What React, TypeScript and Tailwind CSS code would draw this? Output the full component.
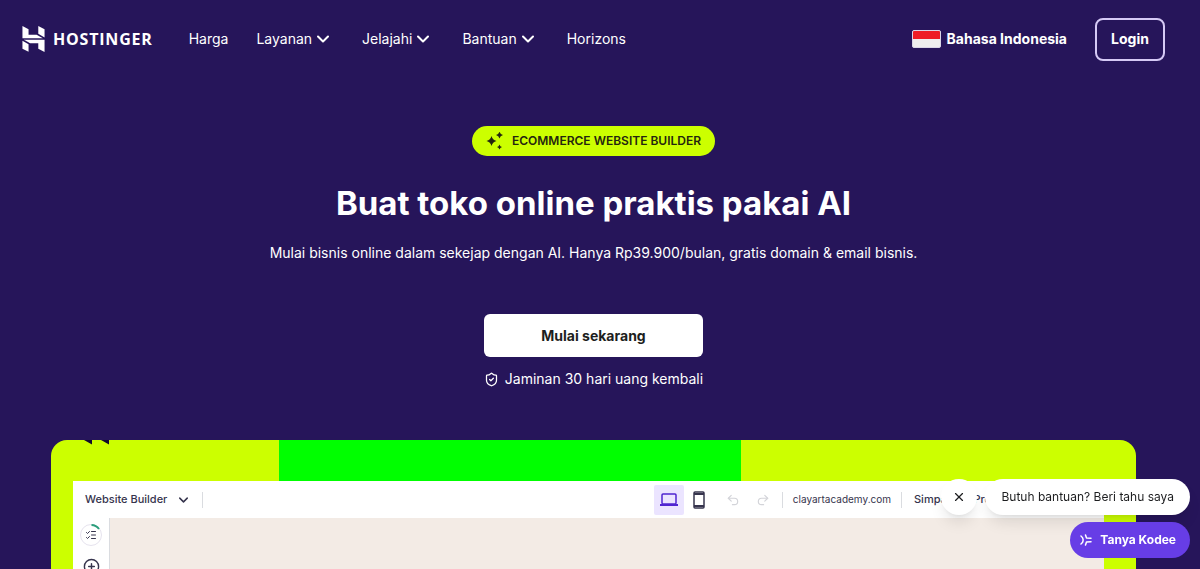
import React from 'react';
import { ListChecks, PlusCircle, Redo2, ShieldCheck, Undo2, X } from 'lucide-react';

const NAV_ITEMS = [
  { label: 'Harga', hasMenu: false },
  { label: 'Layanan', hasMenu: true },
  { label: 'Jelajahi', hasMenu: true },
  { label: 'Bantuan', hasMenu: true },
  { label: 'Horizons', hasMenu: false },
];

const Chevron: React.FC<{ className: string }> = ({ className }) => (
  <svg viewBox="0 0 12 8" className={className} fill="none" aria-hidden="true">
    <path d="M1 1.500l5 5 5-5" stroke="currentColor" strokeWidth="2" strokeLinecap="round" strokeLinejoin="round" />
  </svg>
);

const Logo: React.FC = () => (
  <a href="#" className="flex items-center gap-2 text-white">
    <svg viewBox="1.8 0 20.4 24" className="h-[26px] w-[23px]" fill="currentColor" aria-hidden="true">
      <path d="M16.415 0v7.16l5.785 3.384V2.949L16.415 0ZM1.8 0v11.237h18.815L14.89 8.09l-7.457-.003V3.024L1.8 0Zm14.615 20.894v-5.019l-7.514-.005c.007.033-5.82-3.197-5.82-3.197l19.119.091V24l-5.785-3.106ZM1.8 13.551v7.343l5.633 2.949v-6.988L1.8 13.551Z" />
    </svg>
    <span className="font-['Open_Sans',sans-serif] text-base font-bold tracking-wider">HOSTINGER</span>
  </a>
);

const Header: React.FC = () => (
  <header className="flex h-[78px] items-center justify-between px-[22px]">
    <div className="flex items-center gap-9">
      <Logo />
      <nav className="flex items-center gap-7 text-sm">
        {NAV_ITEMS.map(({ label, hasMenu }) =>
          hasMenu ? (
            <button key={label} type="button" className="flex items-center gap-[5px] pr-[5px]">
              {label}
              <Chevron className="h-2 w-3" />
            </button>
          ) : (
            <a key={label} href="#">
              {label}
            </a>
          )
        )}
      </nav>
    </div>
    <div className="flex items-center gap-7 text-sm font-bold">
      <button type="button" className="flex items-center gap-1.5">
        <span className="flex h-[18px] w-[29px] flex-col overflow-hidden rounded-xs border border-[#d9d6e6] bg-[#eeeeee]">
          <span className="h-2 bg-[#ee1c25]" />
        </span>
        Bahasa Indonesia
      </button>
      <a href="#" className="flex h-[43px] w-[70px] items-center justify-center rounded-lg border-2 border-[#d5c9f5]">
        Login
      </a>
    </div>
  </header>
);

const Hero: React.FC = () => (
  <section className="flex flex-col items-center pt-12 text-center">
    <div className="flex h-[30px] items-center gap-2 rounded-full bg-[#ccff00] px-3.5 text-xs font-semibold text-[#25260f]">
      <svg viewBox="0 0 18 18" className="size-[18px]" fill="currentColor" aria-hidden="true">
        <path d="M5.500 4 Q6.500 8 10.500 9 Q6.500 10 5.500 14 Q4.500 10 .5 9 Q4.500 8 5.500 4Z" />
        <path d="M13.500 -.5 Q14.200 2.300 17 3 Q14.200 3.700 13.500 6.500 Q12.800 3.700 10 3 Q12.800 2.300 13.500 -.5Z" />
        <path d="M13.500 12.500 Q14 14.500 16 15 Q14 15.500 13.500 17.500 Q13 15.500 11 15 Q13 14.500 13.500 12.500Z" />
      </svg>
      ECOMMERCE WEBSITE BUILDER
    </div>
    <h1 className="mt-6 text-[33px] leading-[46px] font-bold">Buat toko online praktis pakai AI</h1>
    <p className="mt-3.5 text-sm leading-[26px]">
      Mulai bisnis online dalam sekejap dengan AI. Hanya Rp39.900/bulan, gratis domain &amp; email bisnis.
    </p>
    <a
      href="#"
      className="mt-12 flex h-[43px] w-[219px] items-center justify-center rounded-md bg-white text-sm font-bold text-[#1d1e20]"
    >
      Mulai sekarang
    </a>
    <p className="mt-3 flex items-center gap-1.5 text-sm">
      <ShieldCheck size={15} />
      Jaminan 30 hari uang kembali
    </p>
  </section>
);

const Divider: React.FC = () => <span className="h-4 w-px bg-[#dadce0]" />;

const Toolbar: React.FC = () => (
  <div className="flex h-[37px] items-center bg-white text-[11px]">
    <button type="button" className="flex items-center gap-3 pl-3 font-medium">
      Website Builder
      <Chevron className="h-1.5 w-[9px]" />
    </button>
    <span className="ml-3.5 flex flex-1">
      <Divider />
    </span>
    <button
      type="button"
      aria-label="Desktop"
      className="flex size-[30px] items-center justify-center rounded-xs bg-[#ebe4ff] text-[#5025d1]"
    >
      <svg viewBox="0 0 18 14" className="h-[14px] w-[18px]" fill="none" aria-hidden="true">
        <rect x="2" y="1" width="14" height="10" rx="1" stroke="currentColor" strokeWidth="1.500" />
        <path d="M0 11h18v1.500q0 .5-.5.5h-17q-.5 0-.5-.5z" fill="currentColor" />
      </svg>
    </button>
    <button type="button" aria-label="Mobile" className="flex w-[30px] items-center justify-center">
      <svg viewBox="0 0 12 18" className="h-[18px] w-3" fill="none" aria-hidden="true">
        <rect x="1" y="1" width="10" height="16" rx="1" stroke="currentColor" strokeWidth="1.500" />
        <path d="M1 3h10M1 15h10" stroke="currentColor" strokeWidth="2" />
      </svg>
    </button>
    <div className="flex items-center gap-4 px-3 text-[#d3d4d9]">
      <button type="button" aria-label="Undo">
        <Undo2 size={14} />
      </button>
      <button type="button" aria-label="Redo">
        <Redo2 size={14} />
      </button>
    </div>
    <Divider />
    <span className="px-2.5 text-[10px]">clayartacademy.com</span>
    <Divider />
    <div className="flex w-[202px] gap-5 pl-3 font-medium">
      <button type="button">Simpan</button>
      <button type="button">Preview</button>
    </div>
  </div>
);

const BuilderPreview: React.FC = () => (
  <section className="relative mx-[51px] mt-[51px] flex flex-1 flex-col overflow-hidden rounded-t-2xl bg-[#ccff00] text-[#36344d]">
    <svg viewBox="0 0 26 5" className="absolute top-0 left-[33px] h-[5px] w-[26px]" fill="#120a2e" aria-hidden="true">
      <path d="M0 0h8v4.500zM17 0h8v4.500z" />
    </svg>
    <div className="mr-[395px] ml-[228px] h-[41px] shrink-0 bg-[#00ff00]" />
    <div className="mr-8 ml-[22px] flex flex-1 flex-col">
      <Toolbar />
      <div className="flex flex-1">
        <aside className="flex w-[37px] flex-col items-center gap-3 border-r border-[#dadce0] bg-white pt-1.5">
          <button
            type="button"
            aria-label="Checklist"
            className="relative flex size-[22px] items-center justify-center rounded-full border border-[#e6e3ee]"
          >
            <ListChecks size={12} />
            <svg viewBox="0 0 22 22" className="absolute -inset-px size-[22px]" fill="none" aria-hidden="true">
              <path d="M11.500 1a10 10 0 0 1 7.500 4" stroke="#2b9e7c" strokeWidth="2" />
            </svg>
          </button>
          <button type="button" aria-label="Add">
            <PlusCircle size={17} />
          </button>
        </aside>
        <div className="flex-1 bg-[#f3ebe5]" />
      </div>
    </div>
  </section>
);

const ChatWidget: React.FC = () => (
  <div className="fixed right-[10px] bottom-[11px] flex flex-col items-end gap-[7px] text-xs">
    <div className="flex items-center gap-2">
      <button
        type="button"
        aria-label="Close"
        className="flex size-9 items-center justify-center rounded-full bg-white text-[#1d1e20] shadow-lg"
      >
        <X size={14} />
      </button>
      <p className="flex h-9 items-center rounded-full bg-white px-4 text-[#1d1e20] shadow-lg">
        Butuh bantuan? Beri tahu saya
      </p>
    </div>
    <button
      type="button"
      className="flex h-9 items-center gap-2 rounded-full bg-[#673de6] pr-3.5 pl-2.5 font-bold text-white"
    >
      <svg
        viewBox="0 0 12 12"
        className="size-3"
        fill="none"
        stroke="currentColor"
        strokeWidth="1.500"
        strokeLinecap="round"
        strokeLinejoin="round"
        aria-hidden="true"
      >
        <path d="M1 2Q3.500 4 3 6Q3.500 8 1 10M5.500 1L6.500 4L11 4.200M5.500 11L6.500 8L11 7.800" />
      </svg>
      Tanya Kodee
    </button>
  </div>
);

export default function App() {
  return (
    <div className="flex h-screen flex-col overflow-hidden bg-[#26155a] pr-[13px] font-[Inter,sans-serif] text-white">
      <Header />
      <Hero />
      <BuilderPreview />
      <ChatWidget />
    </div>
  );
}
